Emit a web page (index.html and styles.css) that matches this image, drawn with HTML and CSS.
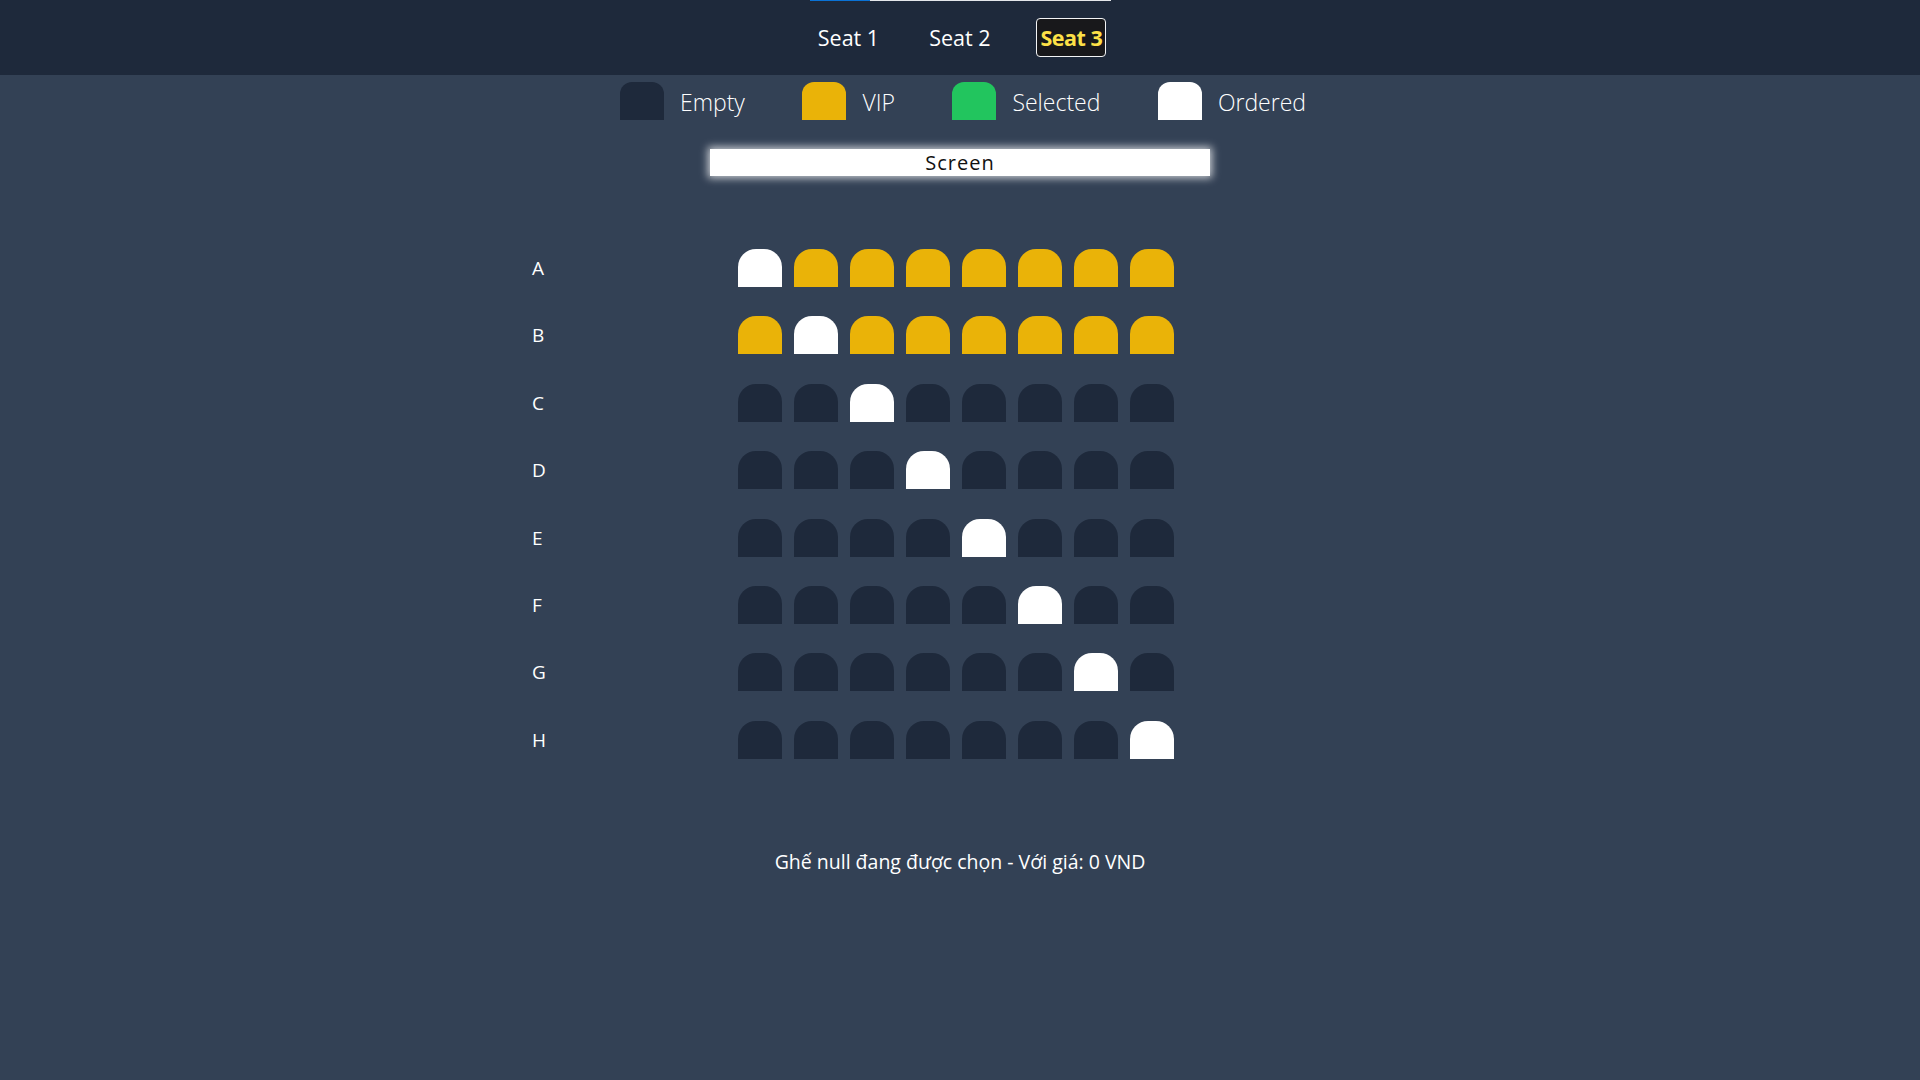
FILE: index.html
```html
<!DOCTYPE html>
<html lang="vi">
<head>
<meta charset="utf-8">
<title>Seats</title>
<link rel="stylesheet" href="styles.css">
</head>
<body>
<header class="header">
  <div class="progress"><div class="progress-fill"></div></div>
  <nav class="tabs">
    <button class="tab">Seat 1</button>
    <button class="tab">Seat 2</button>
    <button class="tab tab-active">Seat 3</button>
  </nav>
</header>
<main class="main">
  <div class="legend">
    <div class="legend-item"><span class="legend-seat empty"></span><span class="legend-label">Empty</span></div>
    <div class="legend-item"><span class="legend-seat vip"></span><span class="legend-label">VIP</span></div>
    <div class="legend-item"><span class="legend-seat selected"></span><span class="legend-label">Selected</span></div>
    <div class="legend-item"><span class="legend-seat ordered"></span><span class="legend-label">Ordered</span></div>
  </div>
  <div class="screen">Screen</div>
  <div class="hall">
    <div class="row"><span class="row-label">A</span><div class="seats"><span class="seat ordered"></span><span class="seat vip"></span><span class="seat vip"></span><span class="seat vip"></span><span class="seat vip"></span><span class="seat vip"></span><span class="seat vip"></span><span class="seat vip"></span></div></div>
    <div class="row"><span class="row-label">B</span><div class="seats"><span class="seat vip"></span><span class="seat ordered"></span><span class="seat vip"></span><span class="seat vip"></span><span class="seat vip"></span><span class="seat vip"></span><span class="seat vip"></span><span class="seat vip"></span></div></div>
    <div class="row"><span class="row-label">C</span><div class="seats"><span class="seat empty"></span><span class="seat empty"></span><span class="seat ordered"></span><span class="seat empty"></span><span class="seat empty"></span><span class="seat empty"></span><span class="seat empty"></span><span class="seat empty"></span></div></div>
    <div class="row"><span class="row-label">D</span><div class="seats"><span class="seat empty"></span><span class="seat empty"></span><span class="seat empty"></span><span class="seat ordered"></span><span class="seat empty"></span><span class="seat empty"></span><span class="seat empty"></span><span class="seat empty"></span></div></div>
    <div class="row"><span class="row-label">E</span><div class="seats"><span class="seat empty"></span><span class="seat empty"></span><span class="seat empty"></span><span class="seat empty"></span><span class="seat ordered"></span><span class="seat empty"></span><span class="seat empty"></span><span class="seat empty"></span></div></div>
    <div class="row"><span class="row-label">F</span><div class="seats"><span class="seat empty"></span><span class="seat empty"></span><span class="seat empty"></span><span class="seat empty"></span><span class="seat empty"></span><span class="seat ordered"></span><span class="seat empty"></span><span class="seat empty"></span></div></div>
    <div class="row"><span class="row-label">G</span><div class="seats"><span class="seat empty"></span><span class="seat empty"></span><span class="seat empty"></span><span class="seat empty"></span><span class="seat empty"></span><span class="seat empty"></span><span class="seat ordered"></span><span class="seat empty"></span></div></div>
    <div class="row"><span class="row-label">H</span><div class="seats"><span class="seat empty"></span><span class="seat empty"></span><span class="seat empty"></span><span class="seat empty"></span><span class="seat empty"></span><span class="seat empty"></span><span class="seat empty"></span><span class="seat ordered"></span></div></div>
  </div>
  <p class="status">Ghế null đang được chọn - Với giá: 0 VND</p>
</main>
</body>
</html>
```

FILE: styles.css
```css
* { box-sizing: border-box; }
html, body {
  margin: 0;
  padding: 0;
  height: 100%;
}
body {
  background: #334155;
  color: #ffffff;
  font-family: "Open Sans", "Noto Sans", sans-serif;
  min-height: 1080px;
}
.header {
  background: #1e293b;
  height: 75px;
  display: flex;
  flex-direction: column;
  align-items: center;
}
.progress {
  width: 301px;
  height: 1px;
  background: #e5e7eb;
  display: flex;
  margin-left: 1px;
}
.progress-fill {
  width: 60px;
  height: 1px;
  background: #0a72d6;
}
.tabs {
  display: flex;
  gap: 42px;
  margin-top: 17px;
  align-items: center;
}
.tab {
  font-family: "Open Sans", "Noto Sans", sans-serif;
  font-size: 21.5px;
  color: #ffffff;
  background: transparent;
  border: 1px solid transparent;
  border-radius: 4px;
  height: 39px;
  padding: 0 3px;
  line-height: 1;
  cursor: pointer;
}
.tab-active {
  background: #18181b;
  border-color: #f3f4f6;
  color: #fde047;
  font-weight: 700;
  letter-spacing: -0.5px;
}
.main {
  display: flex;
  flex-direction: column;
  align-items: center;
}
.legend {
  display: flex;
  gap: 57.5px;
  margin-top: 6px;
  margin-left: 6px;
  align-items: center;
}
.legend-item {
  display: flex;
  align-items: center;
  gap: 16px;
}
.legend-seat {
  width: 44px;
  height: 38px;
  border-radius: 12px 12px 0 0;
  display: block;
}
.legend-label {
  font-size: 23px;
  font-weight: 300;
  line-height: 38px;
  padding-top: 2px;
}
.empty { background: #1e293b; }
.vip { background: #eab308; }
.selected { background: #22c55e; }
.ordered { background: #ffffff; }
.screen {
  margin-top: 28px;
  width: 500px;
  height: 27px;
  background: #ffffff;
  color: #111111;
  font-size: 20px;
  letter-spacing: 1px;
  line-height: 27px;
  text-align: center;
  box-shadow: 0 0 8px 2px rgba(255, 255, 255, 0.75);
}
.hall {
  margin-top: 73px;
  width: 856px;
  display: flex;
  flex-direction: column;
  gap: 29.4px;
}
.row {
  display: flex;
  align-items: center;
  height: 38px;
}
.row-label {
  width: 206px;
  font-size: 19px;
  line-height: 38px;
}
.seats {
  display: flex;
  gap: 12px;
}
.seat {
  display: block;
  width: 44px;
  height: 38px;
  border-radius: 18px 18px 0 0;
}
.status {
  margin: 89px 0 0;
  font-size: 19.5px;
  line-height: 27px;
  text-align: center;
}
```
